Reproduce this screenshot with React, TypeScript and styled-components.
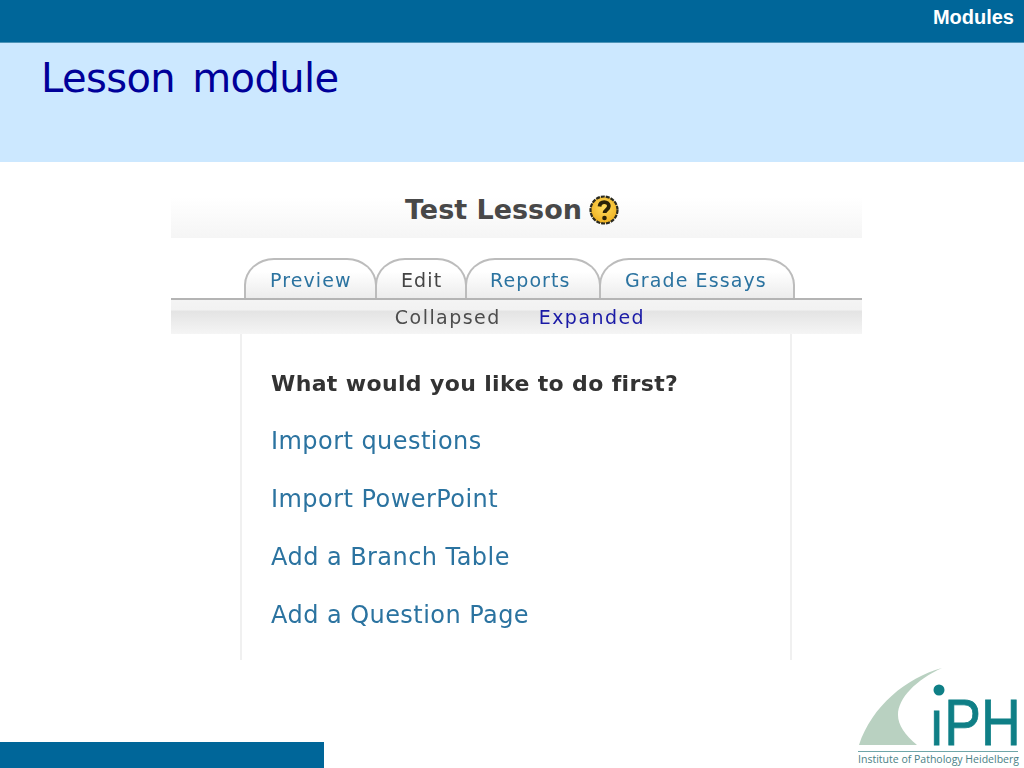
import React from "react";
import styled, { createGlobalStyle } from "styled-components";

const GlobalStyle = createGlobalStyle`
  html, body {
    margin: 0;
    padding: 0;
    background: #fff;
  }
`;

const tabs = [
  { label: "Preview", width: 133, pad: 24, active: false },
  { label: "Edit", width: 92, pad: 24, active: true },
  { label: "Reports", width: 136, pad: 23, active: false },
  { label: "Grade Essays", width: 196, pad: 24, active: false },
];

const links = ["Import questions", "Import PowerPoint", "Add a Branch Table", "Add a Question Page"];

const App = () => {
  return (
    <Page>
      <GlobalStyle />
      <TopBar>
        <SectionName>Modules</SectionName>
      </TopBar>
      <TitleBand>
        <Title>Lesson module</Title>
      </TitleBand>
      <Main>
        <Shot>
          <ShotHeading>
            <ShotTitle>Test Lesson</ShotTitle>
            <HelpIcon viewBox="0 0 30 30">
              <defs>
                <radialGradient id="helpFill" cx="0.5" cy="0.4" r="0.6">
                  <stop offset="0" stopColor="#ffdc5e" />
                  <stop offset="1" stopColor="#eeb020" />
                </radialGradient>
              </defs>
              <circle cx="15" cy="15" r="13.5" fill="url(#helpFill)" stroke="#2a2a20" strokeWidth="2.200" strokeDasharray="4 1" />
              <path d="M10.5 11.500c.3-3 2.200-4.400 4.700-4.400 2.700 0 4.700 1.600 4.700 4 0 3.600-4.300 3.600-4.300 7" fill="none" stroke="#2a2208" strokeWidth="3.800" />
              <circle cx="15.500" cy="23" r="2.300" fill="#2a2208" />
            </HelpIcon>
          </ShotHeading>
          <TabRow>
            {tabs.map((tab) => (
              <Tab key={tab.label} $width={tab.width} $pad={tab.pad} $active={tab.active}>
                {tab.label}
              </Tab>
            ))}
          </TabRow>
          <SubTabs>
            <SubTab>Collapsed</SubTab>
            <SubTab $current>Expanded</SubTab>
          </SubTabs>
          <Content>
            <Question>What would you like to do first?</Question>
            <LinkList>
              {links.map((link) => (
                <ActionLink key={link}>{link}</ActionLink>
              ))}
            </LinkList>
          </Content>
        </Shot>
      </Main>
      <Footer>
        <FooterBar />
        <Logo viewBox="0 0 166 100">
          <path d="M84 0C48 10 14 38 1 77H59C47 67 40 57 40 47C40 30 58 12 84 0Z" fill="#b9d1c1" />
          <circle cx="81" cy="22" r="5.500" fill="#0f7f86" />
          <LogoLetters transform="translate(71 77) scale(0.86 1)">ıPH</LogoLetters>
          <line x1="0" y1="83.500" x2="160" y2="83.500" stroke="#6fa6a8" strokeWidth="1" />
          <LogoCaption transform="translate(0 95) scale(0.915 1)">Institute of Pathology Heidelberg</LogoCaption>
        </Logo>
      </Footer>
    </Page>
  );
};

export default App;

const Page = styled.div`
  display: flex;
  flex-direction: column;
  width: 1024px;
  height: 768px;
  overflow: hidden;
  background: #fff;
`;

const TopBar = styled.header`
  display: flex;
  justify-content: flex-end;
  height: 43px;
  flex: none;
  padding: 7px 10px 0 0;
  box-sizing: border-box;
  background: #006699;
  border-bottom: 1px solid #4d94b8;
`;

const SectionName = styled.span`
  font: bold 20px/20px "Liberation Sans", Arial, sans-serif;
  color: #fff;
`;

const TitleBand = styled.div`
  height: 119px;
  flex: none;
  padding: 12px 0 0 41px;
  box-sizing: border-box;
  background: #cce8ff;
`;

const Title = styled.h1`
  margin: 0;
  font: normal 40px/46px "DejaVu Sans", Verdana, sans-serif;
  letter-spacing: -0.6px;
  word-spacing: 5px;
  color: #000099;
`;

const Main = styled.main`
  height: 498px;
  flex: none;
  padding: 18px 0 0 171px;
  box-sizing: border-box;
`;

const Shot = styled.section`
  display: flex;
  flex-direction: column;
  width: 691px;
  height: 480px;
  font-family: "DejaVu Sans", Verdana, sans-serif;
  filter: blur(0.45px);
`;

const ShotHeading = styled.div`
  display: flex;
  justify-content: center;
  align-items: center;
  gap: 7px;
  height: 58px;
  flex: none;
  padding: 1px 9px 0 0;
  box-sizing: border-box;
  background: linear-gradient(#fff 0%, #fff 30%, #f5f5f5 100%);
`;

const ShotTitle = styled.span`
  font-size: 27px;
  font-weight: bold;
  letter-spacing: 0;
  color: #484848;
`;

const HelpIcon = styled.svg`
  width: 30px;
  height: 30px;
`;

const TabRow = styled.div`
  display: flex;
  height: 42px;
  flex: none;
  margin-top: 20px;
  padding-left: 73px;
  box-sizing: border-box;
  border-bottom: 2px solid #b4b4b4;
`;

const Tab = styled.div<{ $width: number; $pad: number; $active: boolean }>`
  width: ${(p) => p.$width}px;
  height: 40px;
  margin-right: -2px;
  box-sizing: border-box;
  padding: 9px 0 0 ${(p) => p.$pad}px;
  border: 2px solid #bcbcbc;
  border-bottom: none;
  border-radius: 30px 30px 0 0 / 27px 27px 0 0;
  background: linear-gradient(#fff 30%, #ececec 100%);
  font-size: 19px;
  line-height: 22px;
  letter-spacing: 1.1px;
  white-space: nowrap;
  color: ${(p) => (p.$active ? "#444" : "#2b73a0")};
`;

const SubTabs = styled.div`
  display: flex;
  justify-content: center;
  gap: 38px;
  height: 34px;
  flex: none;
  padding: 6px 0 0 7px;
  box-sizing: border-box;
  background: linear-gradient(#f4f4f4 0%, #f2f2f2 28%, #e4e4e4 34%, #f5f5f5 100%);
`;

const SubTab = styled.span<{ $current?: boolean }>`
  font-size: 19px;
  line-height: 22px;
  letter-spacing: 1.45px;
  color: ${(p) => (p.$current ? "#1a1aa6" : "#4c4c4c")};
`;

const Content = styled.div`
  width: 552px;
  height: 326px;
  flex: none;
  margin-left: 69px;
  padding: 36px 0 0 29px;
  box-sizing: border-box;
  border-left: 2px solid #f0f0f0;
  border-right: 2px solid #f0f0f0;
`;

const Question = styled.h2`
  margin: 0;
  font-size: 22px;
  line-height: 28px;
  font-weight: bold;
  letter-spacing: 0.36px;
  color: #333;
`;

const LinkList = styled.div`
  display: flex;
  flex-direction: column;
  gap: 28px;
  margin-top: 28px;
`;

const ActionLink = styled.a`
  font-size: 24px;
  line-height: 30px;
  letter-spacing: 0.45px;
  color: #2b73a0;
`;

const Footer = styled.footer`
  display: flex;
  justify-content: space-between;
  align-items: flex-end;
  flex: 1;
  min-height: 0;
`;

const FooterBar = styled.div`
  width: 324px;
  height: 26px;
  background: #006699;
`;

const Logo = styled.svg`
  width: 166px;
  height: 100px;
`;

const LogoLetters = styled.text`
  font: normal 64px "Liberation Sans", Arial, sans-serif;
  fill: #0f7f86;
  stroke: #0f7f86;
  stroke-width: 0.8px;
`;

const LogoCaption = styled.text`
  font: normal 11.5px "Open Sans", "Liberation Sans", sans-serif;
  fill: #4a7f85;
`;
